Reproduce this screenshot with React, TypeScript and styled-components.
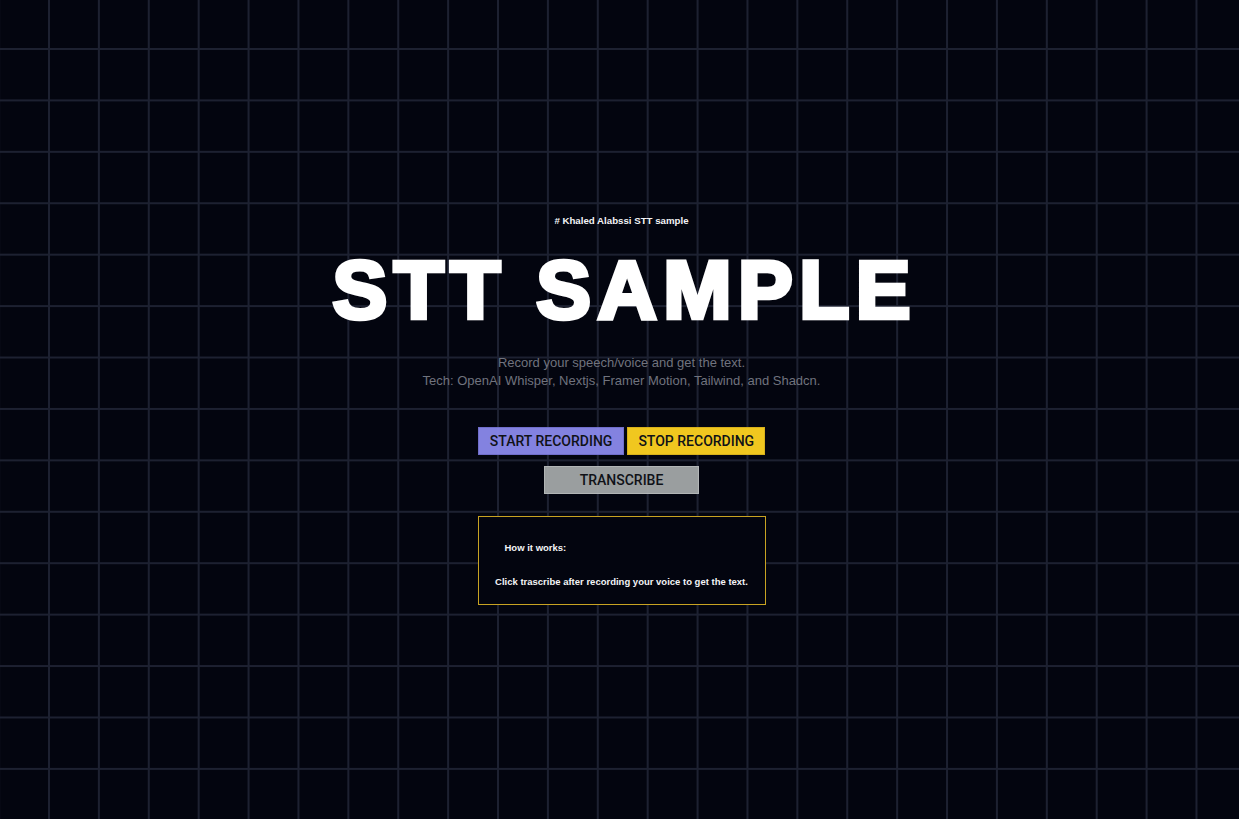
import styled, { createGlobalStyle } from "styled-components";

const GlobalStyle = createGlobalStyle`
  * {
    box-sizing: border-box;
  }
  html, body {
    margin: 0;
    padding: 0;
    background: #03050f;
  }
  body {
    font-family: "Liberation Sans", Arial, sans-serif;
    color: #ffffff;
  }
`;

const Page = styled.main`
  min-height: 100vh;
  display: flex;
  flex-direction: column;
  align-items: center;
  padding: 214px 0 0 4px;
  background-color: #03050f;
  background-image: linear-gradient(to right, #1d2131 2px, transparent 2px),
    linear-gradient(to bottom, #1d2131 2px, transparent 2px);
  background-size: 49.9px 51.43px;
  background-position: 48px 48px;
`;

const Tag = styled.p`
  margin: 0;
  font-size: 9.7px;
  line-height: 14px;
  font-weight: 700;
  color: #f3f4f6;
`;

const Title = styled.h1`
  margin: 21px 0 0;
  font-size: 82px;
  line-height: 82px;
  font-weight: 700;
  letter-spacing: 6.5px;
  padding-left: 6.5px;
  -webkit-text-stroke: 4.5px #ffffff;
  color: #ffffff;
`;

const Subtitle = styled.p`
  margin: 23px 0 0;
  font-size: 13px;
  line-height: 18px;
  text-align: center;
  color: #70737e;
`;

const ButtonRow = styled.div<{ $top: number }>`
  display: flex;
  gap: 3px;
  margin-top: ${(props) => props.$top}px;
`;

const Button = styled.button<{ $bg: string; $border: string; $pad: number }>`
  height: 28px;
  padding: 0 ${(props) => props.$pad}px;
  border: 1px solid ${(props) => props.$border};
  background: ${(props) => props.$bg};
  color: #111318;
  font-family: Roboto, "Liberation Sans", sans-serif;
  font-size: 14px;
  font-weight: 500;
  opacity: 0.94;
  cursor: pointer;
`;

const InfoBox = styled.section`
  margin-top: 22px;
  width: 288px;
  height: 89px;
  border: 1px solid #c8a322;
  background: #03050f;
  padding: 25px 0 0;
`;

const InfoTitle = styled.h2`
  margin: 0;
  padding-left: 26px;
  font-size: 9.5px;
  line-height: 12px;
  font-weight: 700;
  color: #f3f4f6;
`;

const InfoText = styled.p`
  margin: 22px 0 0;
  font-size: 9.5px;
  line-height: 12px;
  font-weight: 700;
  text-align: center;
  color: #f3f4f6;
`;

function App() {
  return (
    <>
      <GlobalStyle />
      <Page>
        <Tag># Khaled Alabssi STT sample</Tag>
        <Title>STT SAMPLE</Title>
        <Subtitle>
          Record your speech/voice and get the text.
          <br />
          Tech: OpenAI Whisper, Nextjs, Framer Motion, Tailwind, and Shadcn.
        </Subtitle>
        <ButtonRow $top={37}>
          <Button $bg="#8c8aee" $border="#7775d6" $pad={11}>
            START RECORDING
          </Button>
          <Button $bg="#ffd420" $border="#e6bc1c" $pad={10}>
            STOP RECORDING
          </Button>
        </ButtonRow>
        <ButtonRow $top={11}>
          <Button $bg="#a4a8a8" $border="#bcc0c0" $pad={35}>
            TRANSCRIBE
          </Button>
        </ButtonRow>
        <InfoBox>
          <InfoTitle>How it works:</InfoTitle>
          <InfoText>
            Click trascribe after recording your voice to get the text.
          </InfoText>
        </InfoBox>
      </Page>
    </>
  );
}

export default App;
